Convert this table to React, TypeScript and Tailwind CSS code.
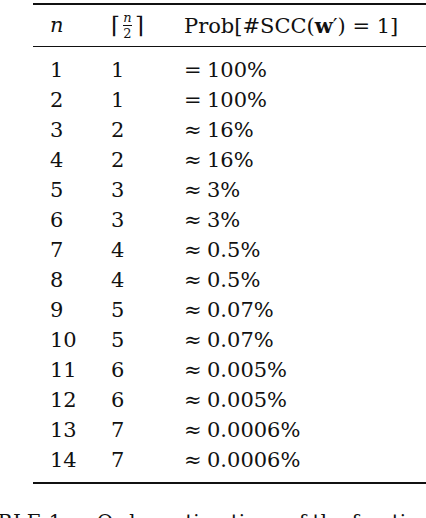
import React from "react";

const rows: [string, string, string, string][] = [
  ["1", "1", "=", "100%"],
  ["2", "1", "=", "100%"],
  ["3", "2", "≈", "16%"],
  ["4", "2", "≈", "16%"],
  ["5", "3", "≈", "3%"],
  ["6", "3", "≈", "3%"],
  ["7", "4", "≈", "0.5%"],
  ["8", "4", "≈", "0.5%"],
  ["9", "5", "≈", "0.07%"],
  ["10", "5", "≈", "0.07%"],
  ["11", "6", "≈", "0.005%"],
  ["12", "6", "≈", "0.005%"],
  ["13", "7", "≈", "0.0006%"],
  ["14", "7", "≈", "0.0006%"],
];

export default function App() {
  return (
    <div
      className="w-[426px] h-[518px] overflow-hidden bg-white text-[#111]"
      style={{ fontFamily: '"DejaVu Serif", "Liberation Serif", serif' }}
    >
      <div className="pt-[3px] pl-[33px]">
        <div className="w-[420px]">
          <div className="h-[2px] bg-[#111]" />
          <div className="h-[41px] flex items-center text-[21px] leading-none">
            <div className="w-[78px] pl-[17px] italic">n</div>
            <div className="w-[73px] flex items-center">
              <span className="text-[23px]">⌈</span>
              <span className="inline-flex flex-col items-center mx-[3px] text-[13px] leading-none">
                <span className="italic">n</span>
                <span className="h-px w-[9px] bg-[#111] my-[1px]" />
                <span>2</span>
              </span>
              <span className="text-[23px]">⌉</span>
            </div>
            <div className="whitespace-nowrap">
              Prob[#SCC(<span className="font-bold">w</span>′) = 1]
            </div>
          </div>
          <div className="h-px bg-[#111]" />
          <div className="pt-[8px] pb-[7px]">
            {rows.map((r) => (
              <div key={r[0]} className="h-[30px] flex items-center text-[21px] leading-none">
                <div className="w-[78px] pl-[17px]">{r[0]}</div>
                <div className="w-[73px]">{r[1]}</div>
                <div className="whitespace-nowrap flex">
                  <span className="w-[23px]">{r[2]}</span>
                  <span>{r[3]}</span>
                </div>
              </div>
            ))}
          </div>
          <div className="h-[2px] bg-[#111]" />
        </div>
      </div>
      <div className="mt-[28px] -ml-[30px] whitespace-nowrap text-[20px] leading-none">
        <span className="tracking-wide">TABLE 1.</span>
        <span className="ml-[28px]">Order estimations of the fraction of</span>
      </div>
    </div>
  );
}
